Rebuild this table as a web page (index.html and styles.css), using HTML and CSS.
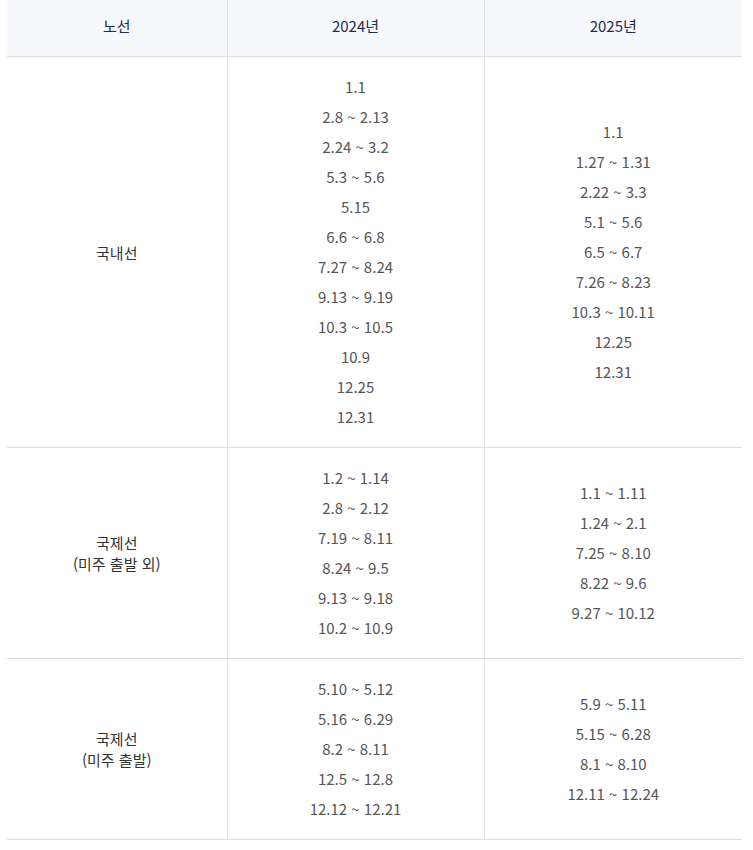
FILE: index.html
```html
<!DOCTYPE html>
<html lang="ko">
<head>
<meta charset="utf-8">
<link rel="stylesheet" href="styles.css">
</head>
<body>
<table class="tbl">
  <colgroup><col class="c1"><col class="c2"><col class="c3"></colgroup>
  <thead>
    <tr><th>노선</th><th>2024년</th><th>2025년</th></tr>
  </thead>
  <tbody>
    <tr>
      <td class="route">국내선</td>
      <td>1.1<br>2.8 ~ 2.13<br>2.24 ~ 3.2<br>5.3 ~ 5.6<br>5.15<br>6.6 ~ 6.8<br>7.27 ~ 8.24<br>9.13 ~ 9.19<br>10.3 ~ 10.5<br>10.9<br>12.25<br>12.31</td>
      <td>1.1<br>1.27 ~ 1.31<br>2.22 ~ 3.3<br>5.1 ~ 5.6<br>6.5 ~ 6.7<br>7.26 ~ 8.23<br>10.3 ~ 10.11<br>12.25<br>12.31</td>
    </tr>
    <tr>
      <td class="route">국제선<br>(미주 출발 외)</td>
      <td>1.2 ~ 1.14<br>2.8 ~ 2.12<br>7.19 ~ 8.11<br>8.24 ~ 9.5<br>9.13 ~ 9.18<br>10.2 ~ 10.9</td>
      <td>1.1 ~ 1.11<br>1.24 ~ 2.1<br>7.25 ~ 8.10<br>8.22 ~ 9.6<br>9.27 ~ 10.12</td>
    </tr>
    <tr>
      <td class="route">국제선<br>(미주 출발)</td>
      <td>5.10 ~ 5.12<br>5.16 ~ 6.29<br>8.2 ~ 8.11<br>12.5 ~ 12.8<br>12.12 ~ 12.21</td>
      <td>5.9 ~ 5.11<br>5.15 ~ 6.28<br>8.1 ~ 8.10<br>12.11 ~ 12.24</td>
    </tr>
  </tbody>
</table>
</body>
</html>
```
FILE: styles.css
```css
body {
  margin: 0;
  padding: 0 11px 0 7px;
  background: #fff;
  font-family: "Noto Sans CJK KR", "Noto Sans", sans-serif;
}
.tbl {
  width: 735px;
  border-collapse: collapse;
  table-layout: fixed;
}
.c1 { width: 220px; }
.c2 { width: 257px; }
.c3 { width: 258px; }
.tbl th {
  height: 51px;
  padding: 0 0 5px;
  background: #f7f8fb;
  color: #1f2d4d;
  font-size: 15px;
  font-weight: 400;
  text-align: center;
  border-bottom: 1px solid #dcdcdc;
}
.tbl td {
  padding: 15px 0;
  font-size: 15px;
  line-height: 30px;
  color: #555;
  text-align: center;
  vertical-align: middle;
  border-bottom: 1px solid #dcdcdc;
}
.tbl th + th,
.tbl td + td {
  border-left: 1px solid #e3e3e3;
}
.tbl td.route {
  line-height: 21px;
  color: #333;
}
```
